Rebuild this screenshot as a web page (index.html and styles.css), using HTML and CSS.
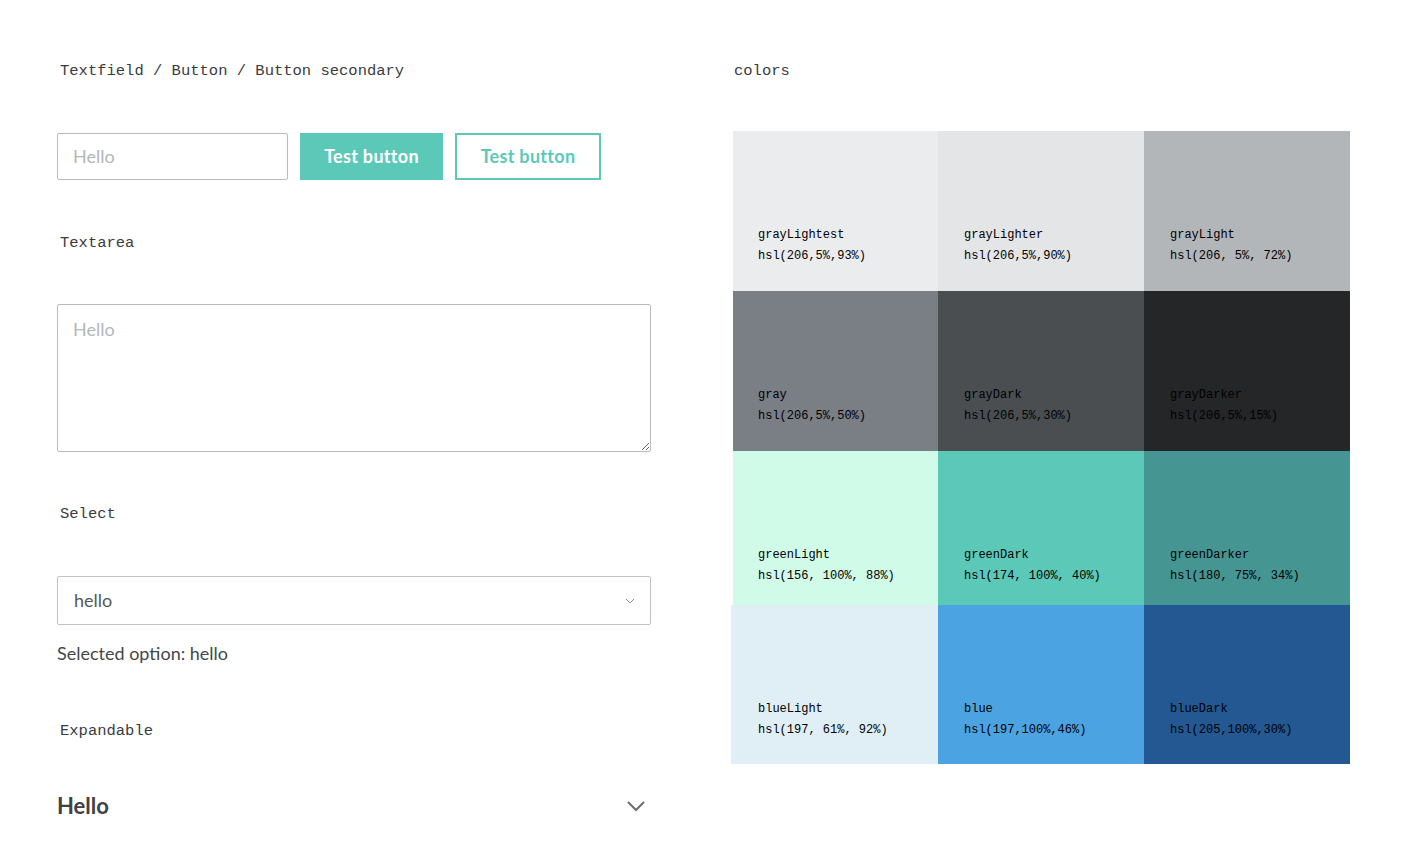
FILE: index.html
```html
<!DOCTYPE html>
<html lang="en">
<head>
<meta charset="utf-8">
<title>Components</title>
<link rel="stylesheet" href="styles.css">
</head>
<body>
<main class="page">
  <section class="left">
    <h2 class="label">Textfield / Button / Button secondary</h2>
    <div class="row">
      <input class="textfield" type="text" placeholder="Hello">
      <button class="btn btn-primary">Test button</button>
      <button class="btn btn-secondary">Test button</button>
    </div>

    <h2 class="label">Textarea</h2>
    <textarea class="textarea" placeholder="Hello"></textarea>

    <h2 class="label">Select</h2>
    <div class="select-wrap">
      <select class="select"><option>hello</option></select>
      <svg class="select-chevron" width="10" height="6" viewBox="0 0 10 6"><path d="M1 1l4 4 4-4" fill="none" stroke="#8a8d91" stroke-width="1"/></svg>
    </div>
    <p class="selected">Selected option: hello</p>

    <h2 class="label label-exp">Expandable</h2>
    <div class="expandable">
      <span class="exp-title">Hello</span>
      <svg class="exp-chevron" width="20" height="12" viewBox="0 0 20 12"><path d="M2 2l8 8 8-8" fill="none" stroke="#6b6e72" stroke-width="2"/></svg>
    </div>
  </section>

  <section class="right">
    <h2 class="label">colors</h2>
    <div class="swatches">
      <div class="sw c-gl1"><span>grayLightest</span><span>hsl(206,5%,93%)</span></div>
      <div class="sw c-gl2"><span>grayLighter</span><span>hsl(206,5%,90%)</span></div>
      <div class="sw c-gl3"><span>grayLight</span><span>hsl(206, 5%, 72%)</span></div>
      <div class="sw c-g"><span>gray</span><span>hsl(206,5%,50%)</span></div>
      <div class="sw c-gd"><span>grayDark</span><span>hsl(206,5%,30%)</span></div>
      <div class="sw c-gdd"><span>grayDarker</span><span>hsl(206,5%,15%)</span></div>
      <div class="sw c-grl"><span>greenLight</span><span>hsl(156, 100%, 88%)</span></div>
      <div class="sw c-grd"><span>greenDark</span><span>hsl(174, 100%, 40%)</span></div>
      <div class="sw c-grdd"><span>greenDarker</span><span>hsl(180, 75%, 34%)</span></div>
      <div class="sw c-bl"><span>blueLight</span><span>hsl(197, 61%, 92%)</span></div>
      <div class="sw c-b"><span>blue</span><span>hsl(197,100%,46%)</span></div>
      <div class="sw c-bd"><span>blueDark</span><span>hsl(205,100%,30%)</span></div>
    </div>
  </section>
</main>
</body>
</html>
```

FILE: styles.css
```css
* { box-sizing: border-box; }
html, body { margin: 0; padding: 0; background: #fff; }
body { font-family: "Lato", "Open Sans", sans-serif; color: #44474a; }

.page {
  display: flex;
  padding: 61px 0 0 57px;
}

.left { width: 594px; flex: none; }
.right { margin-left: 82px; width: 617px; flex: none; }

.label {
  margin: 0;
  font-family: "Liberation Mono", monospace;
  font-size: 15.5px;
  font-weight: normal;
  line-height: 20px;
  color: #3a3c3f;
  padding-left: 3px;
}
.right .label { padding-left: 1px; margin-bottom: 50px; }

.row { display: flex; gap: 12px; margin: 52px 0 53px; }

.textfield {
  width: 231px; height: 47px;
  border: 1px solid #b8babd;
  border-radius: 2px;
  padding: 0 15px 2px;
  font: 18px "Lato", sans-serif;
  color: #44474a;
}
.textfield::placeholder, .textarea::placeholder { color: #b4b6b9; }

.btn {
  height: 47px;
  font: bold 18px "Lato", sans-serif;
  letter-spacing: 0.3px;
  padding: 0 0 1px;
  cursor: pointer;
}
.btn-primary {
  width: 143px;
  background: #5cc9b8;
  color: #fff;
  border: none;
}
.btn-secondary {
  width: 146px;
  background: #fff;
  color: #5cc9b8;
  border: 2px solid #5cc9b8;
}

.textarea {
  display: block;
  width: 594px; height: 148px;
  margin: 51px 0 52px;
  border: 1px solid #b8babd;
  border-radius: 2px;
  padding: 13px 15px;
  font: 18px "Lato", sans-serif;
  resize: both;
}

.select-wrap { position: relative; margin-top: 52px; }
.select {
  display: block;
  width: 594px; height: 49px;
  appearance: none;
  -webkit-appearance: none;
  background: #fff;
  border: 1px solid #c0c2c5;
  border-radius: 2px;
  padding: 0 16px 2px;
  font: 18px "Lato", sans-serif;
  color: #55585b;
}
.select-chevron { position: absolute; right: 16px; top: 22px; }

.selected {
  margin: 16px 0 0;
  font-size: 18px;
  line-height: 24px;
  color: #44474a;
}

.label-exp { margin-top: 56px; }

.expandable {
  display: flex;
  justify-content: space-between;
  align-items: center;
  margin-top: 53px;
  padding-right: 5px;
}
.exp-title { font-weight: bold; font-size: 22px; line-height: 24px; color: #3f4245; }

.swatches {
  display: grid;
  grid-template-columns: 205px 206px 206px;
  grid-template-rows: 160px 160px 154px 159px;
}
.sw {
  display: flex;
  flex-direction: column;
  padding: 94px 0 0 25px;
  font-family: "Liberation Mono", monospace;
  font-size: 12px;
  line-height: 21px;
  color: #000;
}
.c-gl2, .c-gl3, .c-gd, .c-gdd, .c-grd, .c-grdd, .c-b, .c-bd { padding-left: 26px; }
.c-gl1 { background: #ebecee; }
.c-gl2 { background: #e4e5e7; }
.c-gl3 { background: #b3b6b8; }
.c-g { background: #7a7e85; }
.c-gd { background: #4a4e51; }
.c-gdd { background: #252628; }
.c-grl { background: #cffbe8; }
.c-grd { background: #5cc8b8; }
.c-grdd { background: #459593; }
.c-bl { background: #e0eff6; margin-left: -2px; padding-left: 27px; }
.c-b { background: #4ca3e2; }
.c-bd { background: #235893; }
```
